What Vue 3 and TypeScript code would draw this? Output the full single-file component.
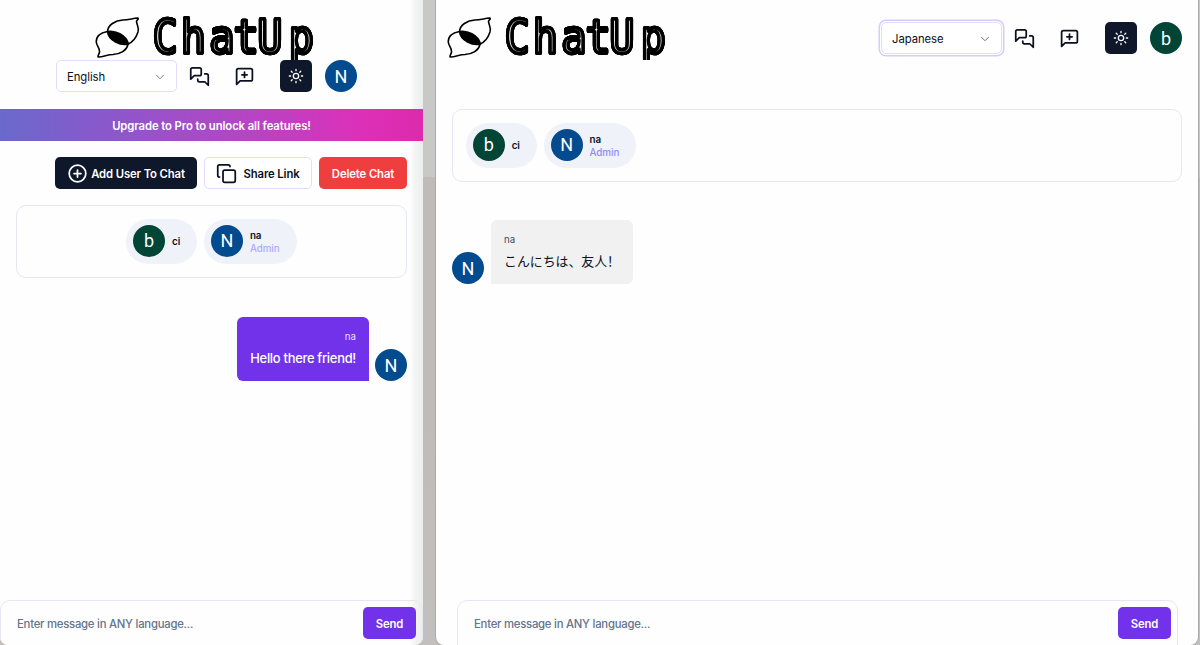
<script setup lang="ts">
interface Member { name: string; letter: string; tone: string; admin?: boolean }
interface Pane {
  id: string
  language: string
  me: Member
  message: string
  owner: boolean
}

const members: Member[] = [
  { name: 'ci', letter: 'b', tone: 'green' },
  { name: 'na', letter: 'N', tone: 'blue', admin: true },
]

const panes: Pane[] = [
  { id: 'left', language: 'English', me: members[1], message: 'Hello there friend!', owner: true },
  { id: 'right', language: 'Japanese', me: members[0], message: 'こんにちは、友人！', owner: false },
]
</script>

<template>
  <div class="desktop">
    <main v-for="pane in panes" :key="pane.id" class="pane" :class="pane.id">
      <header class="header">
        <svg class="logo" width="222" height="60" viewBox="0 0 222 60">
          <g fill="none" stroke="#000" stroke-width="1.6" stroke-linejoin="round" stroke-linecap="round">
            <path d="M12.5 31.5C13 25 20 20.500 28 20C34 20 37 18.500 42.500 18C44 18.500 43 19.500 41.500 21C41.500 25 44.500 27 43 32C41 38 37 42.500 33 44" />
            <path d="M12.500 31.500C5 33 1 37 1.300 42C1.500 46 5 48 4.500 52C4.500 54 2 56 3.300 57C9 57 12 54.500 18 54.500C26 54 32 50 33 44" />
            <path fill="#000" d="M12.500 31.500C20 30 31 35 33.500 44C26 46 13.500 41 12.500 31.500Z" />
          </g>
          <text class="wordmark" transform="scale(0.9 1)" x="64.100 95.300 127.200 154.200 180.600 215.300" y="53.300">ChatUp</text>
        </svg>
        <nav class="controls">
          <button class="select">
            <span>{{ pane.language }}</span>
            <svg width="12" height="12" viewBox="0 0 24 24"><path d="m5 8.500 7 7 7-7" /></svg>
          </button>
          <svg class="icon chats" width="21" height="21" viewBox="0 0 24 24">
            <path d="M14 9a2 2 0 0 1-2 2H6l-4 4V4a2 2 0 0 1 2-2h8a2 2 0 0 1 2 2z" />
            <path d="M18 9h2a2 2 0 0 1 2 2v11l-4-4h-6a2 2 0 0 1-2-2v-1" />
          </svg>
          <svg class="icon plus" width="21" height="21" viewBox="0 0 24 24">
            <path d="M21 15a2 2 0 0 1-2 2H7l-4 4V5a2 2 0 0 1 2-2h14a2 2 0 0 1 2 2zM12 7v6M9 10h6" />
          </svg>
          <button class="theme">
            <svg width="16" height="16" viewBox="0 0 24 24">
              <circle cx="12" cy="12" r="4" />
              <path d="M12 2v2M12 20v2M4.900 4.900l1.400 1.400M17.700 17.700l1.400 1.400M2 12h2M20 12h2M6.300 17.700l-1.400 1.400M19.100 4.900l-1.400 1.400" />
            </svg>
          </button>
          <span class="avatar" :class="pane.me.tone">{{ pane.me.letter }}</span>
        </nav>
      </header>

      <template v-if="pane.owner">
        <div class="banner">Upgrade to Pro to unlock all features!</div>
        <div class="actions">
          <button class="btn dark">
            <svg width="21" height="21" viewBox="0 0 24 24"><circle cx="12" cy="12" r="9.500" /><path d="M8 12h8M12 8v8" /></svg>
            Add User To Chat
          </button>
          <button class="btn outline">
            <svg width="21" height="21" viewBox="0 0 24 24">
              <rect x="8" y="8" width="14" height="14" rx="2" /><path d="M4 16a2 2 0 0 1-2-2V4a2 2 0 0 1 2-2h10a2 2 0 0 1 2 2" />
            </svg>
            Share Link
          </button>
          <button class="btn red">Delete Chat</button>
        </div>
      </template>

      <section class="members">
        <div v-for="m in members" :key="m.name" class="pill">
          <span class="avatar" :class="m.tone">{{ m.letter }}</span>
          <div class="who">
            <span>{{ m.name }}</span>
            <span v-if="m.admin" class="admin">Admin</span>
          </div>
        </div>
      </section>

      <section class="message">
        <span class="avatar blue">N</span>
        <div class="bubble">
          <span class="sender">na</span>
          <p>{{ pane.message }}</p>
        </div>
      </section>

      <form class="composer" @submit.prevent>
        <span class="placeholder">Enter message in ANY language...</span>
        <button class="btn send">Send</button>
      </form>
    </main>
  </div>
</template>

<style>
html, body { margin: 0; overflow: hidden; }
</style>

<style scoped>
* { box-sizing: border-box; }
.desktop {
  display: flex;
  gap: 13px;
  width: 1200px;
  height: 645px;
  overflow: hidden;
  background: linear-gradient(#c8c8c6 0 177px, #bfbbb8 177px 420px, #c2c0be 645px);
  font-family: Inter, "Noto Sans CJK SC", sans-serif;
  font-size: 11.3px;
  font-weight: 500;
  color: #0b1020;
}
button { font: inherit; color: inherit; margin: 0; padding: 0; border: 0; background: none; }
svg { display: block; flex: none; fill: none; stroke: currentColor; stroke-width: 2; stroke-linecap: round; stroke-linejoin: round; }
.pane { display: flex; flex-direction: column; height: 645px; background: #fefefe; overflow: hidden; }
.left {
  width: 423px;
  border-radius: 0 0 8px 8px;
  background: linear-gradient(90deg, #fefefe 410px, #f3f4f4 415px, #eceeee 423px);
}
.right { width: 762px; border-radius: 0 0 8px 8px; box-shadow: 0 0 0 1px #aaa; }

.header { display: flex; flex: none; height: 109px; }
.left .header { flex-direction: column; }
.right .header { justify-content: space-between; padding: 0 16px 0 11px; }
.logo { height: 60px; overflow: hidden; }
.left .logo { margin-left: 95px; }
.wordmark {
  font-family: "DejaVu Sans Mono", monospace;
  font-size: 46px;
  fill: #fff;
  stroke: #000;
  stroke-width: 3.6px;
  filter: drop-shadow(0.9px 0 0 #000) drop-shadow(0 0.4px 0 #000);
}
.controls { display: flex; align-items: center; height: 32px; }
.left .controls { margin-left: 56px; padding-top: 0.5px; }
.right .controls { margin-top: 22px; }
.select {
  display: flex; align-items: center; justify-content: space-between;
  width: 121px; height: 32px; padding: 1px 10px 0;
  border: 1px solid #e3dcfb; border-radius: 5px; background: #fff; font-weight: 400; letter-spacing: -0.05px;
}
.right .select { box-shadow: 0 0 0 1px #fff, 0 0 0 2.500px #d8cafa; }
.select svg { color: #777; }
.chats { margin-left: 12px; }
.plus { margin-left: 24px; }
.theme {
  display: grid; place-items: center; width: 32px; height: 32px; margin: 0 13px 0 25px;
  border-radius: 5px; background: #0f172a; color: #f8fafc;
}
.avatar {
  display: grid; place-items: center; flex: none; width: 32px; height: 32px; border-radius: 50%;
  color: #fff; font: 400 18px/33px Roboto, sans-serif;
}
.blue { background: #024b8e; }
.green { background: #004536; }

.banner {
  flex: none; height: 32px; line-height: 34px; text-align: center; color: #fff; font-weight: 600; letter-spacing: -0.09px;
  background: linear-gradient(90deg, #6a69cc, #8a58cc 25%, #b545c4 58%, #dc30b9 85%, #dc2bab);
}
.actions { display: flex; justify-content: flex-end; gap: 7px; margin: 16px 16px 0 0; }
.btn {
  display: flex; align-items: center; justify-content: center; flex: none;
  height: 32px; padding-top: 1px; border-radius: 5px; font-weight: 600; white-space: nowrap; letter-spacing: -0.12px;
}
.dark { width: 142px; gap: 3px; background: #0f172a; color: #fff; }
.outline { width: 108px; gap: 6px; border: 1px solid #e3dcfb; background: #fff; }
.red { width: 88px; background: #ef3e3e; color: #fff; }

.members {
  display: flex; gap: 7px; flex: none; height: 73px; margin: 0 16px; padding: 13px;
  border: 1px solid #e6e7f2; border-radius: 10px;
}
.left .members { justify-content: center; margin-top: 16px; }
.pill {
  display: flex; align-items: center; gap: 7px; height: 45px; padding: 0 17px 0 6.700px;
  border-radius: 23px; background: #eff2f8;
}
.pill .avatar { line-height: 32px; margin-top: -1px; }
.who { display: flex; flex-direction: column; font-size: 9.800px; line-height: 13px; font-weight: 600; letter-spacing: -0.05px; }
.admin { color: #918bfa; font-weight: 500; }
.left .admin { color: #b0abfa; }

.message { display: flex; align-items: flex-end; gap: 7px; margin: 38px 16px 0; }
.left .message { flex-direction: row-reverse; margin-top: 39px; gap: 6px; }
.bubble {
  height: 64px; padding: 13px; border-radius: 6px 6px 6px 0;
  background: #f1f1f1; font-size: 12.900px; line-height: 19px; font-weight: 400;
}
.left .bubble {
  text-align: right; background: #7132e9; color: #fff; border-radius: 6px 6px 0 6px; font-weight: 500; letter-spacing: -0.27px;
}
.sender { display: block; font-size: 9.700px; line-height: 13px; font-weight: 400; letter-spacing: 0; color: #454b57; }
.left .sender { color: #e9e0fc; }
.bubble p { margin: 6px 0 0; white-space: nowrap; }

.composer {
  display: flex; align-items: center; justify-content: space-between; flex: none;
  height: 54px; margin-top: auto; margin-bottom: -9px; padding: 0 6px 8px 16px;
  border: 1px solid #e8e6f4; border-radius: 10px; background: transparent;
}
.right .composer { margin-left: 21px; margin-right: 20px; }
.placeholder { padding-top: 2px; color: #64748b; letter-spacing: -0.23px; }
.send { width: 53px; background: #7132e9; color: #fff; }
</style>
